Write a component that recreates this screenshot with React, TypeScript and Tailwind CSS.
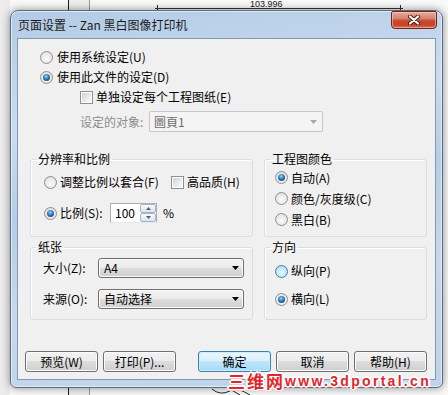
import React from "react";

function Radio({ checked, hover }: { checked?: boolean; hover?: boolean }) {
  return (
    <span
      className={`flex h-[13px] w-[13px] shrink-0 items-center justify-center rounded-full border ${
        hover
          ? "border-[#3c7fb1] bg-[radial-gradient(circle_at_50%_60%,#eaf7fe_0%,#bfe3f8_60%,#a4d4f1_100%)]"
          : "border-[#8e8f8f] bg-[radial-gradient(circle_at_50%_60%,#fbfbfb_0%,#e6e6e6_65%,#cfcfcf_100%)]"
      }`}
    >
      {checked && (
        <span className="h-[7px] w-[7px] rounded-full bg-[radial-gradient(circle_at_45%_35%,#9ad8f8_0%,#2b79b2_45%,#0c3a63_100%)]" />
      )}
    </span>
  );
}

function Checkbox() {
  return (
    <span className="flex h-[13px] w-[13px] shrink-0 items-center justify-center border border-[#8e8f8f] bg-white">
      <span className="h-[9px] w-[9px] bg-[linear-gradient(135deg,#cdd1d6_0%,#eef0f2_70%,#f8f8f8_100%)]" />
    </span>
  );
}

function Arrow({ color }: { color: string }) {
  return (
    <svg width="7" height="4" viewBox="0 0 7 4">
      <polygon points="0,0 7,0 3.5,4" fill={color} />
    </svg>
  );
}

function Combo({ text, w }: { text: string; w: string }) {
  return (
    <div
      className={`${w} flex h-[20px] items-center justify-between rounded-[3px] border border-[#707070] bg-[linear-gradient(#f2f2f2_0%,#ebebeb_50%,#dddddd_50%,#cfcfcf_100%)] pl-[5px] pr-[4px] shadow-[inset_0_0_0_1px_#fafafa]`}
    >
      <span>{text}</span>
      <Arrow color="#000" />
    </div>
  );
}

function Btn({ children, def, extra }: { children: React.ReactNode; def?: boolean; extra?: string }) {
  return (
    <div
      className={`flex h-[21px] w-[73px] items-center justify-center rounded-[3px] border ${
        def
          ? "border-[#3c7fb1] bg-[linear-gradient(#eaf6fd_0%,#d9f0fc_50%,#bee6fd_50%,#a7d9f5_100%)] shadow-[inset_0_0_0_1px_#cdeefe]"
          : "border-[#707070] bg-[linear-gradient(#f2f2f2_0%,#ebebeb_50%,#dddddd_50%,#cfcfcf_100%)] shadow-[inset_0_0_0_1px_#fbfbfb]"
      } ${extra ?? ""}`}
    >
      {children}
    </div>
  );
}

function Group({
  title,
  w,
  children,
}: {
  title: string;
  w: string;
  children: React.ReactNode;
}) {
  return (
    <fieldset className={`${w} rounded-[3px] border border-[#d5dfe5] shadow-[inset_1px_1px_0_#ffffff]`}>
      <legend className="ml-[5px] px-[2px] leading-[14px]">{title}</legend>
      {children}
    </fieldset>
  );
}

export default function App() {
  return (
    <div className="relative h-[395px] w-[448px] overflow-hidden bg-[#f7f7f7] pl-[10px] pt-[10px] font-['Noto_Sans_CJK_SC','Noto_Sans',sans-serif] text-[12px] leading-[14px] text-black">
      {/* background CAD drawing */}
      <svg className="absolute inset-0" width="448" height="395" viewBox="0 0 448 395">
        <rect x="0" y="0" width="448" height="395" fill="#f9f9f9" />
        <rect x="0" y="0" width="10" height="395" fill="#ececec" />
        <rect x="69" y="0" width="20" height="395" fill="#efefef" />
        <line x1="68.5" y1="0" x2="68.5" y2="395" stroke="#1a1a1a" strokeWidth="1" />
        <line x1="89.5" y1="0" x2="89.5" y2="395" stroke="#9a9a9a" strokeWidth="1" />
        <line x1="155" y1="8.5" x2="403" y2="8.5" stroke="#333" strokeWidth="1" />
        <line x1="157.5" y1="5" x2="157.5" y2="11" stroke="#333" strokeWidth="1" />
        <line x1="400.5" y1="5" x2="400.5" y2="11" stroke="#333" strokeWidth="1" />
        <text x="250" y="7" fontSize="9" fill="#222" fontFamily="Liberation Sans, sans-serif">
          103.996
        </text>
        <path d="M212 389 Q220 396 230 391 M228 388 L240 395 M238 389 Q245 392 250 395" stroke="#222" strokeWidth="1" fill="none" />
      </svg>

      {/* window */}
      <div className="relative z-10 flex h-[378px] w-[433px] flex-col rounded-t-[8px] rounded-b-[6px] border border-[#5b6b7c] bg-[linear-gradient(172deg,#b3cbe5_0%,#c9dcf0_28%,#b5cde7_48%,#c5d8ed_70%,#bed3ea_100%)] shadow-[0_0_9px_rgba(0,0,0,0.45),inset_0_0_0_1px_rgba(255,255,255,0.55)]">
        <div className="flex h-[27px] items-start justify-between pl-[7px] pr-[5px]">
          <div className="mt-[6px] leading-[16px] text-[#1b1b1b]">页面设置 -- Zan 黑白图像打印机</div>
          <div className="flex h-[18px] w-[46px] items-center justify-center rounded-b-[4px] rounded-t-[2px] border border-[#6b261a] bg-[linear-gradient(#e8a99c_0%,#d8816f_40%,#c54a30_55%,#c9422b_80%,#e06a48_100%)] shadow-[inset_0_0_0_1px_rgba(255,220,210,0.5)]">
            <svg width="12" height="10" viewBox="0 0 12 10">
              <path d="M2 1.5 L10 8.5 M10 1.5 L2 8.5" stroke="#4a1a10" strokeWidth="4" strokeLinecap="round" />
              <path d="M2 1.5 L10 8.5 M10 1.5 L2 8.5" stroke="#ffffff" strokeWidth="2.2" strokeLinecap="round" />
            </svg>
          </div>
        </div>

        {/* client */}
        <div className="mx-[6px] flex h-[342px] flex-col border border-[#8299b1] bg-[#f0f0f0]">
          <div className="flex flex-col pl-[22px] pt-[8px]">
            <div className="flex h-[20px] items-center gap-[4px]">
              <Radio />
              <span>使用系统设定(U)</span>
            </div>
            <div className="flex h-[20px] items-center gap-[4px]">
              <Radio checked />
              <span>使用此文件的设定(D)</span>
            </div>
            <div className="flex h-[20px] items-center gap-[3px] pl-[40px]">
              <Checkbox />
              <span>单独设定每个工程图纸(E)</span>
            </div>
            <div className="mt-[4px] flex h-[21px] items-center pl-[40px]">
              <span className="w-[69px] text-[#8d8d8d]">设定的对象:</span>
              <div className="flex h-[21px] w-[174px] items-center justify-between rounded-[2px] border border-[#c4c8cc] bg-[#f4f4f4] pl-[4px] pr-[5px] text-[#6d6d6d]">
                <span>圖頁1</span>
                <Arrow color="#a9a9a9" />
              </div>
            </div>
          </div>

          <div className="mt-[20px] flex gap-[11px] pl-[12px]">
            <Group title="分辨率和比例" w="w-[223px]">
              <div className="flex flex-col pb-[12px] pl-[13px] pt-[6px]">
                <div className="flex h-[20px] items-center">
                  <div className="flex w-[127px] items-center gap-[3px]">
                    <Radio />
                    <span>调整比例以套合(F)</span>
                  </div>
                  <div className="flex items-center gap-[3px]">
                    <Checkbox />
                    <span>高品质(H)</span>
                  </div>
                </div>
                <div className="mt-[10px] flex h-[22px] items-center">
                  <Radio checked />
                  <span className="ml-[3px] w-[50px]">比例(S):</span>
                  <div className="flex h-[20px] w-[47px] border border-[#abadb3] border-b-[#e3e9ef] bg-white">
                    <div className="flex flex-1 items-center pl-[4px]">100</div>
                    <div className="flex w-[16px] flex-col">
                      <div className="flex flex-1 items-center justify-center rounded-[2px] border border-[#a7b4c2] bg-[linear-gradient(#f7f9fb,#dde4ec)]">
                        <svg width="5" height="3" viewBox="0 0 5 3">
                          <polygon points="0,3 5,3 2.5,0" fill="#4d6185" />
                        </svg>
                      </div>
                      <div className="flex flex-1 items-center justify-center rounded-[2px] border border-[#a7b4c2] bg-[linear-gradient(#f7f9fb,#dde4ec)]">
                        <svg width="5" height="3" viewBox="0 0 5 3">
                          <polygon points="0,0 5,0 2.5,3" fill="#4d6185" />
                        </svg>
                      </div>
                    </div>
                  </div>
                  <span className="ml-[6px]">%</span>
                </div>
              </div>
            </Group>
            <Group title="工程图颜色" w="w-[163px]">
              <div className="flex flex-col pl-[10px] pt-[1px]">
                <div className="flex h-[21px] items-center gap-[3px]">
                  <Radio checked />
                  <span>自动(A)</span>
                </div>
                <div className="flex h-[21px] items-center gap-[3px]">
                  <Radio />
                  <span>颜色/灰度级(C)</span>
                </div>
                <div className="flex h-[21px] items-center gap-[3px]">
                  <Radio />
                  <span>黑白(B)</span>
                </div>
              </div>
            </Group>
          </div>

          <div className="mt-[3px] flex gap-[11px] pl-[12px]">
            <Group title="纸张" w="w-[223px]">
              <div className="flex flex-col gap-[11px] pb-[10px] pl-[12px] pt-[4px]">
                <div className="flex h-[20px] items-center">
                  <span className="w-[55px]">大小(Z):</span>
                  <Combo text="A4" w="w-[146px]" />
                </div>
                <div className="flex h-[20px] items-center">
                  <span className="w-[55px]">来源(O):</span>
                  <Combo text="自动选择" w="w-[146px]" />
                </div>
              </div>
            </Group>
            <Group title="方向" w="w-[163px]">
              <div className="flex flex-col gap-[8px] pl-[10px] pt-[7px]">
                <div className="flex h-[20px] items-center gap-[3px]">
                  <Radio hover />
                  <span>纵向(P)</span>
                </div>
                <div className="flex h-[20px] items-center gap-[3px]">
                  <Radio checked />
                  <span>横向(L)</span>
                </div>
              </div>
            </Group>
          </div>

          <div className="mt-auto flex gap-[5px] pb-[7px] pl-[7px]">
            <Btn>预览(W)</Btn>
            <Btn>打印(P)...</Btn>
            <Btn def extra="ml-[17px]">
              确定
            </Btn>
            <Btn>取消</Btn>
            <Btn>帮助(H)</Btn>
          </div>
        </div>
      </div>

      {/* watermark */}
      <div className="absolute left-[228px] top-[372px] z-20 flex items-end font-bold leading-[18px] text-[#e3262b] [text-shadow:1px_0_0_#fff,-1px_0_0_#fff,0_1px_0_#fff,0_-1px_0_#fff,1px_1px_0_#fff,-1px_-1px_0_#fff,1px_-1px_0_#fff,-1px_1px_0_#fff,2px_0_0_#fff,-2px_0_0_#fff,0_2px_0_#f3c7c7,0_-2px_0_#fff]">
        <span className="text-[17px] tracking-[2px]">三维网</span>
        <span className="font-['Liberation_Sans',sans-serif] text-[14px] tracking-[2.3px]">www.3dportal.cn</span>
      </div>
    </div>
  );
}
